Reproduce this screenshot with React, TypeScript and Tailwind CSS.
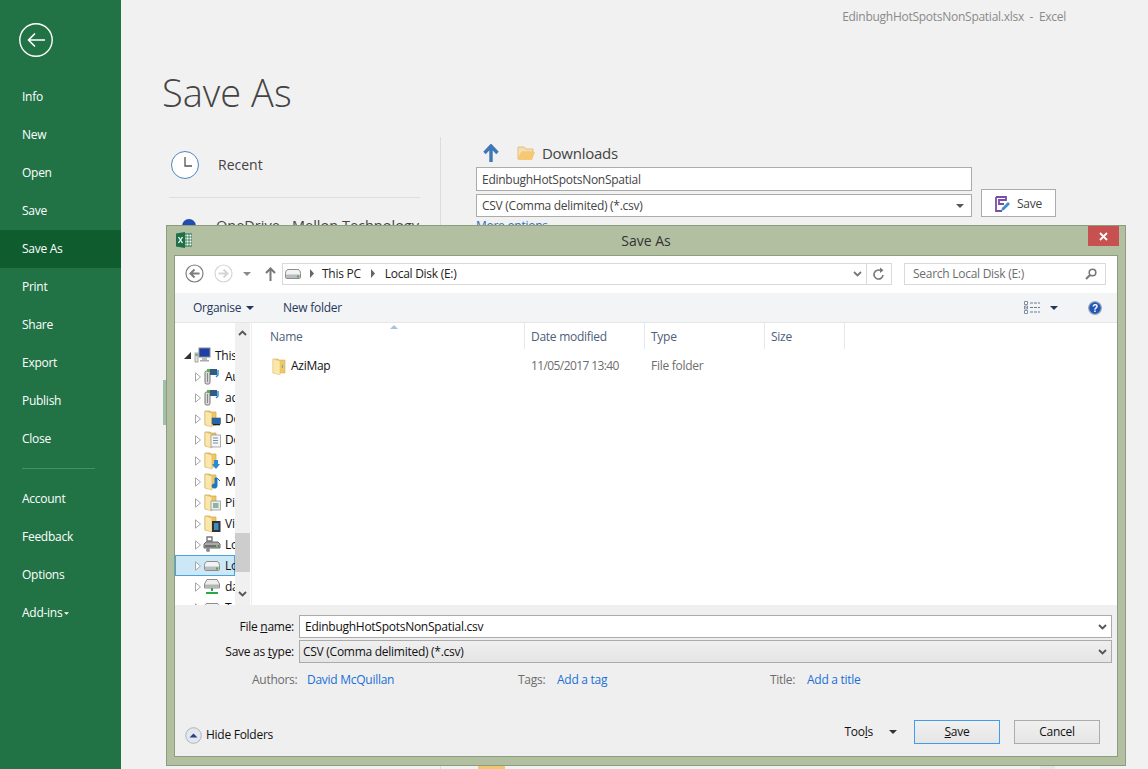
import React from "react";

const Caret = ({ color = "#444", w = 8, h = 4 }: { color?: string; w?: number; h?: number }) => (
  <svg width={w} height={h} viewBox="0 0 8 4" className="shrink-0"><path d="M0 0h8L4 4z" fill={color} /></svg>
);
const Chevron = ({ color = "#666", up = false }: { color?: string; up?: boolean }) => (
  <svg width="9" height="6" viewBox="0 0 9 6" className="shrink-0"><path d={up ? "M1 5l3.5-3.5L8 5" : "M1 1l3.5 3.5L8 1"} stroke={color} strokeWidth="1.8" fill="none" /></svg>
);
const Sep = () => (
  <svg width="6" height="9" viewBox="0 0 6 9" className="shrink-0"><path d="M1 0l4 4.5L1 9z" fill="#666" /></svg>
);
const Expander = () => (
  <svg width="6" height="10" viewBox="0 0 6 10" className="shrink-0"><path d="M.5 .8l5 4.2-5 4.2z" fill="#fff" stroke="#a6a6a6" /></svg>
);
const Drive = () => (
  <svg width="16" height="12" viewBox="0 0 16 12" className="shrink-0">
    <path d="M3 1.5h10c1.5 0 2.5 2 2.5 4v4c0 .6-.5 1-1 1h-13c-.5 0-1-.4-1-1v-4c0-2 1-4 2.5-4z" fill="#f2f2f2" stroke="#8c8c8c" />
    <rect x="1" y="6.5" width="14" height="3.5" fill="#b9bcbf" />
    <rect x="12" y="7.5" width="2" height="2" fill="#4fa83a" />
  </svg>
);
const FolderBase = ({ children }: { children?: React.ReactNode }) => (
  <svg width="17" height="18" viewBox="0 0 17 18" className="shrink-0">
    <path d="M1 1h5l1 1h5v13H1z" fill="#f0c860" stroke="#c9a64f" strokeWidth=".7" />
    <path d="M1 1l7 2v14l-7-2z" fill="#fbe7a9" stroke="#d6b565" strokeWidth=".6" />
    {children}
  </svg>
);
const Server = () => (
  <svg width="17" height="17" viewBox="0 0 17 17" className="shrink-0">
    <rect x="1" y="3" width="5" height="13" rx="1.5" fill="#d8d8d8" stroke="#777" />
    <rect x="3" y="5" width="1" height="9" fill="#888" />
    <rect x="6" y="1" width="7" height="6" fill="#355a7f" />
    <rect x="3" y="1" width="3" height="3" fill="#5fb04a" />
    <path d="M14 2v5l-2 2" stroke="#1b8fd9" strokeWidth="1.4" fill="none" />
  </svg>
);
const Monitor = () => (
  <svg width="17" height="17" viewBox="0 0 17 17" className="shrink-0">
    <rect x="1" y="6" width="3" height="9" fill="#e4e4e4" stroke="#888" strokeWidth=".7" />
    <rect x="1.5" y="7" width="2" height="2" fill="#5fb04a" />
    <rect x="5" y="1" width="11" height="9" fill="#1c3fa8" stroke="#8a8a8a" />
    <rect x="8" y="10" width="5" height="3" fill="#bbb" />
    <rect x="6" y="13" width="9" height="1.5" fill="#aaa" />
  </svg>
);
const SysDrive = () => (
  <svg width="18" height="17" viewBox="0 0 18 17" className="shrink-0">
    <path d="M4 1h5v4H4z" fill="none" stroke="#777" strokeWidth="1.4" />
    <path d="M3 6h12l2 2v4H1V8z" fill="#aaa" stroke="#666" />
    <rect x="2" y="9" width="14" height="2" fill="#6f6f6f" />
    <rect x="13" y="9" width="2" height="2" fill="#6fc04f" />
    <circle cx="5" cy="14" r="2" fill="#888" />
  </svg>
);
const NetDrive = () => (
  <svg width="17" height="17" viewBox="0 0 17 17" className="shrink-0">
    <path d="M3 1.5h10L15.5 6v4h-15V6z" fill="#eee" stroke="#8c8c8c" />
    <rect x="1" y="6.5" width="14" height="3" fill="#b5b5b5" />
    <path d="M8 10v3M2 15h12" stroke="#2aa84a" strokeWidth="2" />
  </svg>
);

const nav1 = ["Info", "New", "Open", "Save", "Save As", "Print", "Share", "Export", "Publish", "Close"];
const nav2 = ["Account", "Feedback", "Options"];

const overlays: Record<string, React.ReactNode> = {
  desktop: <><rect x="8" y="8" width="8.5" height="6" fill="#1f67b0" stroke="#555" strokeWidth=".6" /><rect x="9" y="14" width="7" height="1.3" fill="#222" /></>,
  docs: <><rect x="7" y="4" width="9.5" height="12" fill="#f6f6f6" stroke="#8a8a8a" strokeWidth=".7" /><path d="M9 7h5M9 9.500h5M9 12h5" stroke="#7b8fa8" /></>,
  down: <path d="M10 8h4v4h2l-4 5-4-5h2z" fill="#2a8ad8" />,
  music: <path d="M13 5v8a2.500 2 0 1 1-2-2V5zM13 5l3 3" fill="#1b78c8" stroke="#1b78c8" />,
  pics: <><rect x="7" y="7" width="9.500" height="9" fill="#e9eef2" stroke="#8a8a8a" strokeWidth=".7" /><rect x="9" y="9" width="5.500" height="5" fill="#8fb5a0" /></>,
  video: <><rect x="8" y="6" width="8.500" height="11" fill="#333" /><rect x="10" y="8" width="4.500" height="7" fill="#3b8fbf" /></>,
};

const tree: { t: string; icon: React.ReactNode; sel?: boolean }[] = [
  { t: "Autodesk 360", icon: <Server /> },
  { t: "admin", icon: <Server /> },
  { t: "Desktop", icon: <FolderBase>{overlays.desktop}</FolderBase> },
  { t: "Documents", icon: <FolderBase>{overlays.docs}</FolderBase> },
  { t: "Downloads", icon: <FolderBase>{overlays.down}</FolderBase> },
  { t: "Music", icon: <FolderBase>{overlays.music}</FolderBase> },
  { t: "Pictures", icon: <FolderBase>{overlays.pics}</FolderBase> },
  { t: "Videos", icon: <FolderBase>{overlays.video}</FolderBase> },
  { t: "Local Disk (C:)", icon: <SysDrive /> },
  { t: "Local Disk (E:)", icon: <Drive />, sel: true },
  { t: "data", icon: <NetDrive /> },
  { t: "Temp", icon: <Drive /> },
];

function TreePane() {
  return (
    <div className="flex w-[76px] shrink-0 bg-white">
      <div className="w-[60px] shrink-0 overflow-hidden pt-[22px]">
        <div className="flex h-[21px] items-center whitespace-nowrap">
          <svg width="7" height="7" viewBox="0 0 7 7" className="ml-[9px] mr-[3px] shrink-0"><path d="M7 0v7H0z" fill="#333" /></svg>
          <Monitor />
          <span className="ml-[4px] text-[12px] text-[#111]">This PC</span>
        </div>
        {tree.map((r) => (
          <div
            key={r.t}
            className={r.sel ? "flex h-[21px] items-center whitespace-nowrap border border-[#4aa3df] bg-[#cce8f6] pl-[19px]" : "flex h-[21px] items-center whitespace-nowrap border border-transparent pl-[19px]"}
          >
            <Expander />
            <span className="ml-[2px] flex w-[18px] shrink-0 justify-center">{r.icon}</span>
            <span className="ml-[4px] text-[12px] text-[#111]">{r.t}</span>
          </div>
        ))}
      </div>
      <div className="flex w-[15px] shrink-0 flex-col items-center bg-[#f0f0f0]">
        <div className="flex h-[20px] items-center"><Chevron color="#555" up /></div>
        <div className="mt-[190px] h-[39px] w-full bg-[#cdcdcd]" />
        <div className="mt-[19px]"><Chevron color="#555" /></div>
      </div>
    </div>
  );
}

function FileList() {
  const cols = [
    { t: "Name", w: "w-[273px]" },
    { t: "Date modified", w: "w-[120px]" },
    { t: "Type", w: "w-[120px]" },
    { t: "Size", w: "w-[80px]" },
  ];
  return (
    <div className="min-w-0 flex-1 border-l border-[#ededed] bg-white">
      <div className="relative flex h-[26px]">
        {cols.map((c) => (
          <div key={c.t} className={`${c.w} flex h-[26px] items-center border-r border-[#e5e9ef] pl-[6px] pt-[2px] text-[12px] text-[#4c607a]`}>
            {c.t === "Name" ? <span className="pl-[12px]">{c.t}</span> : c.t}
          </div>
        ))}
        <svg width="8" height="4" viewBox="0 0 8 4" className="absolute left-[138px] top-[2px]"><path d="M0 4l4-4 4 4z" fill="#a9c3dc" /></svg>
      </div>
      <div className="mt-[6px] flex h-[22px] items-center text-[12px]">
        <span className="ml-[20px] flex w-[19px]">
          <svg width="14" height="17" viewBox="0 0 14 17">
            <path d="M1 1h5l1 1h6v13H1z" fill="#f0c860" stroke="#d3b061" strokeWidth=".6" />
            <path d="M1 1l7 2v14l-7-2z" fill="#fbe7a9" stroke="#e0c278" strokeWidth=".5" />
            <path d="M10.500 7v3" stroke="#5aa5dc" />
          </svg>
        </span>
        <span className="w-[240px] text-[#111]">AziMap</span>
        <span className="w-[120px] tracking-[-0.6px] text-[#6d6d6d]">11/05/2017 13:40</span>
        <span className="text-[#6d6d6d]">File folder</span>
      </div>
    </div>
  );
}

function Dialog() {
  return (
    <div className="absolute left-[166px] top-[225px] flex h-[541px] w-[960px] flex-col border border-[#8e9c7e] bg-[#b2c0a1]">
      <div className="relative flex h-[29px] shrink-0 items-center justify-center">
        <svg width="16" height="16" viewBox="0 0 16 16" className="absolute left-[9px] top-[6px]">
          <rect x="6" y="2" width="10" height="12" fill="#fff" stroke="#1e7145" />
          <path d="M10 2v12M13 2v12M6 5h10M6 8h10M6 11h10" stroke="#1e7145" strokeWidth=".8" />
          <path d="M0 1.500L9 0v16l-9-1.500z" fill="#1e7145" />
          <path d="M2.500 5l4 6M6.500 5l-4 6" stroke="#fff" strokeWidth="1.3" />
        </svg>
        <span className="pb-[1px] text-[14px] tracking-normal text-[#333]">Save As</span>
        <div className="absolute right-[6px] top-0 flex h-[20px] w-[31px] items-center justify-center bg-[#c75050]">
          <svg width="9" height="9" viewBox="0 0 9 9"><path d="M1 1l7 7M8 1l-7 7" stroke="#fff" strokeWidth="1.8" /></svg>
        </div>
      </div>
      <div className="mx-[7px] mb-[8px] flex min-h-0 flex-1 flex-col border border-[#8e9c7e] bg-[#efefef]">
        {/* nav bar */}
        <div className="flex h-[37px] shrink-0 items-center bg-white pb-[2px] pl-[10px] pr-[11px]">
          <svg width="19" height="19" viewBox="0 0 19 19" className="shrink-0">
            <circle cx="9.500" cy="9.500" r="8.500" fill="#fff" stroke="#7d7d7d" strokeWidth="1.2" />
            <path d="M14.500 9.500H6M9.500 5.500l-4 4 4 4" stroke="#7d7d7d" strokeWidth="2" fill="none" />
          </svg>
          <svg width="19" height="19" viewBox="0 0 19 19" className="ml-[10px] shrink-0">
            <circle cx="9.500" cy="9.500" r="8.500" fill="#fff" stroke="#d5d5d5" strokeWidth="1.2" />
            <path d="M4.500 9.500H13M9.500 5.500l4 4-4 4" stroke="#d5d5d5" strokeWidth="2" fill="none" />
          </svg>
          <span className="ml-[10px]"><Caret color="#8a8a8a" /></span>
          <svg width="11" height="14" viewBox="0 0 11 14" className="ml-[14px] shrink-0">
            <path d="M5.500 14V2M1 6l4.500-4.500L10 6" stroke="#777" strokeWidth="2" fill="none" />
          </svg>
          <div className="ml-[6px] flex h-[22px] min-w-0 flex-1 items-center border border-[#d9d9d9] text-[12px] text-[#222]">
            <span className="ml-[2px]"><Drive /></span>
            <span className="ml-[8px]"><Sep /></span>
            <span className="ml-[7px]">This PC</span>
            <span className="ml-[9px]"><Sep /></span>
            <span className="ml-[9px]">Local Disk (E:)</span>
            <span className="ml-auto mr-[4px]"><Chevron color="#777" /></span>
            <span className="flex h-full w-[25px] items-center justify-center border-l border-[#d9d9d9]">
              <svg width="12" height="14" viewBox="0 0 12 14"><path d="M10 8a4.500 4.500 0 1 1-2-4.200" stroke="#777" strokeWidth="1.6" fill="none" /><path d="M7 .5v5.500l3.500-2.700z" fill="#777" /></svg>
            </span>
          </div>
          <div className="ml-[12px] flex h-[22px] w-[202px] shrink-0 items-center justify-between border border-[#d9d9d9] pl-[8px] pr-[8px] text-[12px] text-[#6d6d6d]">
            <span>Search Local Disk (E:)</span>
            <svg width="12" height="12" viewBox="0 0 12 12"><circle cx="7.500" cy="4.500" r="3.300" fill="none" stroke="#777" strokeWidth="1.6" /><path d="M5 7l-4 4" stroke="#777" strokeWidth="2" /></svg>
          </div>
        </div>
        {/* command bar */}
        <div className="flex h-[30px] shrink-0 items-center border-b border-[#e6e6e6] bg-[#f3f4f6] pl-[18px] pr-[15px] text-[12px] text-[#1e395b]">
          <span>Organise</span>
          <span className="ml-[5px]"><Caret color="#1e395b" /></span>
          <span className="ml-[29px]">New folder</span>
          <svg width="16" height="13" viewBox="0 0 16 13" className="ml-auto shrink-0">
            <path d="M.5.500h3v3h-3zM.5 5h3v3h-3zM.5 9.500h3v3h-3z" fill="#fff" stroke="#7f8fa3" />
            <path d="M6 2h10M6 6.500h10M6 11h10" stroke="#6d7a8c" strokeDasharray="3 1" />
            <rect x="1.500" y="6" width="1" height="1" fill="#d33" />
          </svg>
          <span className="ml-[10px]"><Caret color="#1e395b" /></span>
          <svg width="14" height="14" viewBox="0 0 14 14" className="ml-[30px] shrink-0">
            <circle cx="7" cy="7" r="6.300" fill="#1f55b8" stroke="#9aa5b5" strokeWidth="1.2" />
            <text x="7" y="10.500" fontSize="10" fontWeight="700" textAnchor="middle" fill="#fff" fontFamily="Liberation Sans">?</text>
          </svg>
        </div>
        {/* body */}
        <div className="flex h-[282px] shrink-0">
          <TreePane />
          <FileList />
        </div>
        {/* form */}
        <div className="flex flex-1 flex-col px-[5px] pt-[10px] text-[12px]">
          <div className="flex h-[23px] items-center">
            <span className="w-[119px] pr-[5px] text-right text-[#111]">File <u>n</u>ame:</span>
            <div className="flex h-[23px] flex-1 items-center justify-between border border-[#ababab] bg-white pl-[5px] pr-[4px] text-[#111]">
              <span>EdinbughHotSpotsNonSpatial.csv</span>
              <Chevron color="#555" />
            </div>
          </div>
          <div className="mt-[2px] flex h-[23px] items-center">
            <span className="w-[119px] pr-[5px] text-right text-[#111]">Save as <u>t</u>ype:</span>
            <div className="flex h-[23px] flex-1 items-center justify-between border border-[#ababab] bg-gradient-to-b from-[#efefef] to-[#e5e5e5] pl-[3px] pr-[4px] text-[#111]">
              <span>CSV (Comma delimited) (*.csv)</span>
              <Chevron color="#555" />
            </div>
          </div>
          <div className="mt-[5px] flex h-[24px] items-center">
            <span className="ml-[72px] w-[55px] text-[#6d6d6d]">Authors:</span>
            <span className="w-[211px] text-[#1a6fd8]">David McQuillan</span>
            <span className="w-[39px] text-[#6d6d6d]">Tags:</span>
            <span className="w-[213px] text-[#1a6fd8]">Add a tag</span>
            <span className="w-[37px] text-[#6d6d6d]">Title:</span>
            <span className="text-[#1a6fd8]">Add a title</span>
          </div>
          <div className="mt-[28px] flex h-[24px] items-center">
            <div className="mt-[6px] flex items-center">
              <svg width="17" height="17" viewBox="0 0 17 17" className="ml-[5px] shrink-0">
                <circle cx="8.500" cy="8.500" r="7.800" fill="#e4e8ee" stroke="#aab4c0" />
                <path d="M4.500 10.500l4-4 4 4z" fill="#24408a" />
              </svg>
              <span className="ml-[4px] text-[#111]">Hide Folders</span>
            </div>
            <span className="ml-auto text-[#111]">Too<u>l</u>s</span>
            <span className="ml-[16px]"><Caret color="#333" /></span>
            <div className="ml-[17px] flex h-[24px] w-[86px] items-center justify-center border border-[#3f9cf0] bg-gradient-to-b from-[#f0f0f0] to-[#e5e5e5] text-[#111]"><span><u>S</u>ave</span></div>
            <div className="ml-[14px] mr-[12px] flex h-[24px] w-[86px] items-center justify-center border border-[#acacac] bg-gradient-to-b from-[#f0f0f0] to-[#e5e5e5] text-[#111]">Cancel</div>
          </div>
        </div>
      </div>
    </div>
  );
}

export default function App() {
  return (
    <div className="relative flex h-[769px] w-[1148px] overflow-hidden bg-[#f1f1f1] font-['Open_Sans','Noto_Sans',sans-serif] tracking-[-0.27px] text-[#444]">
      <aside className="flex w-[121px] shrink-0 flex-col bg-[#217346] text-white">
        <div className="h-[78px] pl-[19px] pt-[23px]">
          <svg width="34" height="34" viewBox="0 0 34 34">
            <circle cx="17" cy="17" r="16.200" fill="none" stroke="#fff" strokeWidth="1.4" />
            <path d="M26 17H10M16 10.500L9.500 17l6.500 6.500" fill="none" stroke="#fff" strokeWidth="1.6" />
          </svg>
        </div>
        {nav1.map((n) => (
          <div key={n} className={n === "Save As" ? "flex h-[38px] items-center bg-[#0f5c2f] pl-[22px] text-[12px]" : "flex h-[38px] items-center pl-[22px] text-[12px]"}>{n}</div>
        ))}
        <div className="ml-[22px] mt-[10px] h-px w-[73px] bg-[#4a8d68]" />
        <div className="mt-[11px]">
          {nav2.map((n) => (
            <div key={n} className="flex h-[38px] items-center pl-[22px] text-[12px]">{n}</div>
          ))}
          <div className="flex h-[38px] items-center pl-[22px] text-[12px]">Add-ins<span className="ml-[2px]"><Caret color="#fff" w={5} h={3} /></span></div>
        </div>
      </aside>
      <main className="relative min-w-0 flex-1">
        <div className="flex h-[33px] justify-end pr-[82px] pt-[8px] text-[12px] text-[#8a8a8a]">
          <span>EdinbughHotSpotsNonSpatial.xlsx&nbsp; -&nbsp; Excel</span>
        </div>
        <h1 className="ml-[41px] h-[104px] pt-[31px] text-[38px] font-light leading-[56px] tracking-normal text-[#444]">Save As</h1>
        <div className="flex">
          <div className="w-[320px] shrink-0 border-r border-[#dcdcdc] pl-[50px] pr-[20px]">
            <div className="flex h-[60px] items-center pb-[5px]">
              <svg width="28" height="28" viewBox="0 0 28 28" className="shrink-0">
                <circle cx="14" cy="14" r="13.500" fill="#fff" stroke="#4a86c5" />
                <path d="M14 6v9h7" fill="none" stroke="#555" strokeWidth="1.3" />
              </svg>
              <span className="ml-[19px] text-[14px] tracking-normal text-[#444]">Recent</span>
            </div>
            <div className="-ml-[2px] w-[251px] border-t border-[#dedede]" />
            <div className="flex items-center pt-[17px]">
              <span className="ml-[11px] h-[14px] w-[14px] rounded-full bg-[#1f4eb0]" />
              <span className="ml-[20px] whitespace-nowrap text-[14.5px] tracking-normal text-[#444]">OneDrive - Mellon Technology</span>
            </div>
            <div className="h-[600px]" />
          </div>
          <div className="pl-[35px] pt-[4px]">
            <div className="flex h-[24px] items-center">
              <svg width="16" height="18" viewBox="0 0 16 18" className="ml-[7px] shrink-0"><path d="M8 18V3M1.500 9L8 2l6.500 7" fill="none" stroke="#3f78b5" strokeWidth="3.400" /></svg>
              <svg width="19" height="16" viewBox="0 0 19 16" className="ml-[18px] shrink-0"><path d="M1 14V2h6l2 2h7v3H5z" fill="#f5deb0" stroke="#e2bf7a" /><path d="M1 15l3-8h14l-3 8z" fill="#f6c873" /></svg>
              <span className="ml-[6px] text-[15px] text-[#444]">Downloads</span>
            </div>
            <div className="mt-[2px] flex h-[24px] w-[496px] items-center border border-[#ababab] bg-white pl-[5px] pt-[2px] text-[12px] text-[#444]">EdinbughHotSpotsNonSpatial</div>
            <div className="mt-[3px] flex items-start">
              <div className="flex h-[23px] w-[496px] items-center justify-between border border-[#ababab] bg-white pl-[5px] pr-[7px] text-[12px] text-[#444]">
                <span>CSV (Comma delimited) (*.csv)</span>
                <Caret color="#555" />
              </div>
              <div className="-mt-[5px] ml-[9px] flex h-[28px] w-[75px] items-center justify-center border border-[#ababab] bg-white pt-[1px] text-[12px] text-[#444]">
                <svg width="16" height="16" viewBox="0 0 16 16" className="mr-[6px]"><path d="M1 1h10v3H4v4h5M1 1v14h6" fill="none" stroke="#7a4ea8" strokeWidth="1.8" /><path d="M6 15l1-3 6-6 2 2-6 6z" fill="#3b8fd0" /></svg>
                Save
              </div>
            </div>
            <div className="text-[12px] text-[#2f6fb5]">More options...</div>
            <div className="ml-[2px] mt-[530px] h-[20px] w-[27px] bg-[#f0c673]" />
          </div>
        </div>
        <div className="absolute left-[42px] top-[380px] h-[45px] w-[3px] bg-[#9fbfa9]" />
        <div className="absolute left-[919px] top-[760px] h-[20px] w-[15px] bg-[#e6e6e6]" />
      </main>
      <Dialog />
    </div>
  );
}
